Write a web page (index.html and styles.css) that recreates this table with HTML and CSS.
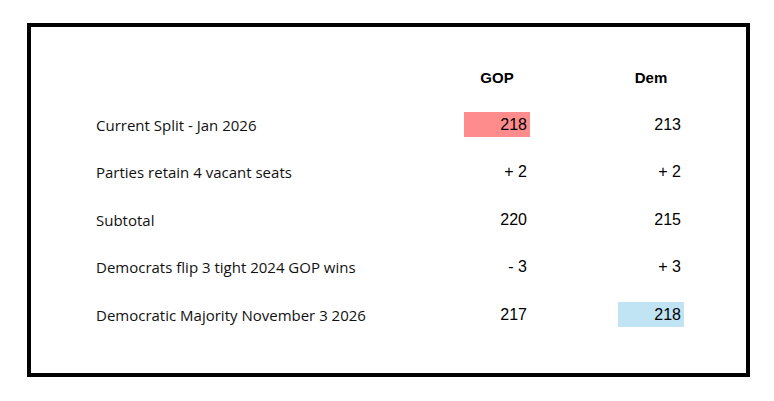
FILE: index.html
```html
<!DOCTYPE html>
<html lang="en">
<head>
<meta charset="utf-8">
<title>House Majority Projection</title>
<link rel="stylesheet" href="styles.css">
</head>
<body>
<div class="frame">
  <div class="grid">
    <div class="label"></div>
    <div class="head">GOP</div>
    <div class="spacer"></div>
    <div class="head">Dem</div>

    <div class="label">Current Split - Jan 2026</div>
    <div class="num red">218</div>
    <div class="spacer"></div>
    <div class="num">213</div>

    <div class="label">Parties retain 4 vacant seats</div>
    <div class="num">+ 2</div>
    <div class="spacer"></div>
    <div class="num">+ 2</div>

    <div class="label">Subtotal</div>
    <div class="num">220</div>
    <div class="spacer"></div>
    <div class="num">215</div>

    <div class="label">Democrats flip 3 tight 2024 GOP wins</div>
    <div class="num">- 3</div>
    <div class="spacer"></div>
    <div class="num">+ 3</div>

    <div class="label">Democratic Majority November 3 2026</div>
    <div class="num">217</div>
    <div class="spacer"></div>
    <div class="num blue">218</div>
  </div>
</div>
</body>
</html>
```
FILE: styles.css
```css
html, body {
  margin: 0;
  padding: 0;
  background: #ffffff;
}

.frame {
  box-sizing: border-box;
  margin: 23px 0 0 27px;
  width: 723px;
  height: 354px;
  border: 4px solid #000000;
  background: #ffffff;
}

.grid {
  display: grid;
  grid-template-columns: 368px 66px 88px 66px;
  grid-auto-rows: 25px;
  row-gap: 22.5px;
  padding: 37.5px 0 0 65px;
}

.label {
  display: flex;
  align-items: center;
  font-family: "Open Sans", sans-serif;
  font-size: 15px;
  color: #111111;
  white-space: nowrap;
}

.head {
  display: flex;
  align-items: center;
  justify-content: center;
  font-family: "Liberation Sans", Arial, sans-serif;
  font-weight: bold;
  font-size: 15px;
  color: #000000;
}

.num {
  display: flex;
  align-items: center;
  justify-content: flex-end;
  padding-right: 3px;
  font-family: "Liberation Sans", Arial, sans-serif;
  font-size: 16px;
  color: #000000;
}

.red {
  background: #ff8c8c;
}

.blue {
  background: #c1e4f5;
}
```
